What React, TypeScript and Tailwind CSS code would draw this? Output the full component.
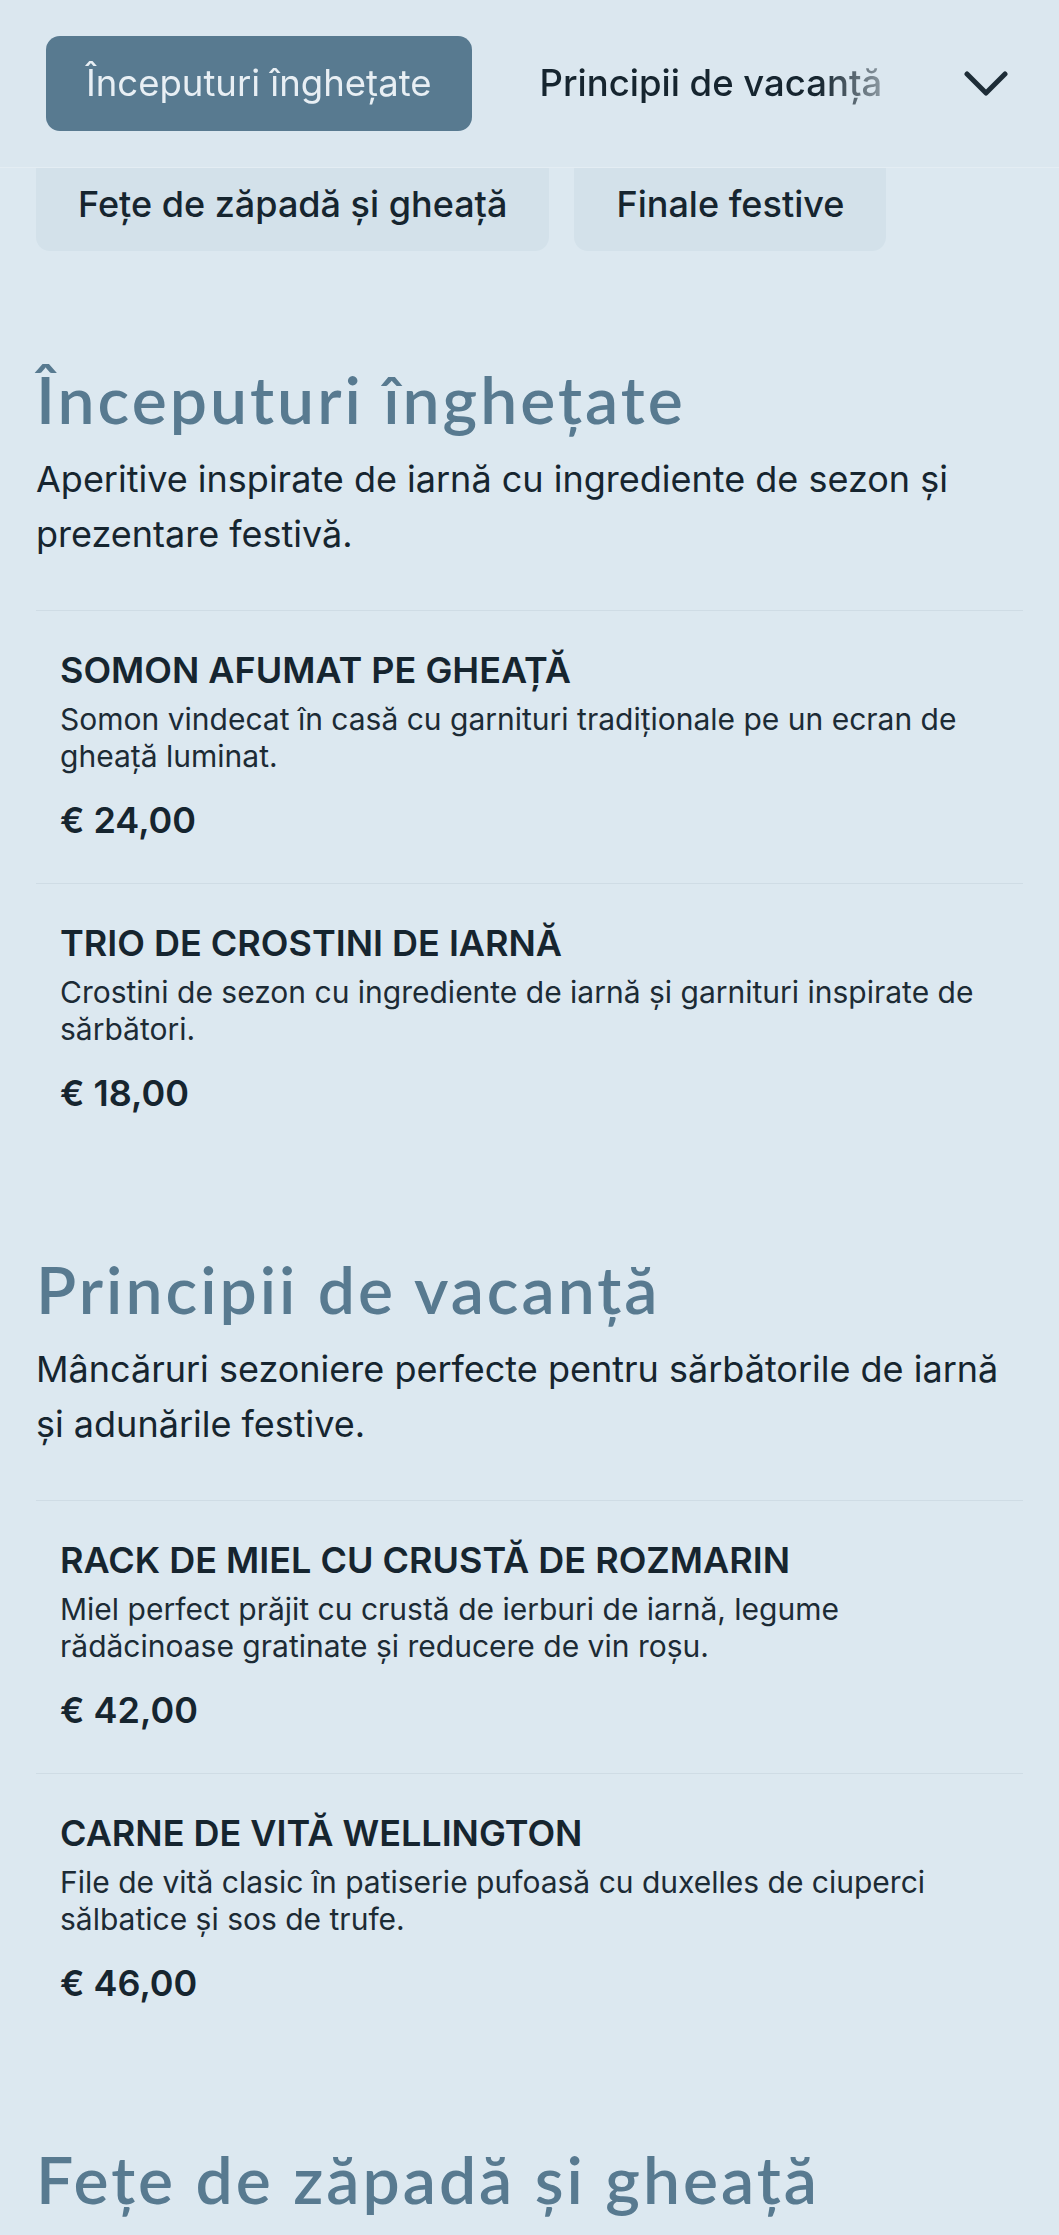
import React from 'react'

type Item = { name: string; description: string; price: string }
type Section = { id: string; title: string; description?: string; items: Item[] }

const sections: Section[] = [
  {
    id: 'inceputuri',
    title: 'Începuturi înghețate',
    description: 'Aperitive inspirate de iarnă cu ingrediente de sezon și prezentare festivă.',
    items: [
      {
        name: 'Somon afumat pe gheață',
        description: 'Somon vindecat în casă cu garnituri tradiționale pe un ecran de gheață luminat.',
        price: '€ 24,00',
      },
      {
        name: 'Trio de crostini de iarnă',
        description: 'Crostini de sezon cu ingrediente de iarnă și garnituri inspirate de sărbători.',
        price: '€ 18,00',
      },
    ],
  },
  {
    id: 'principii',
    title: 'Principii de vacanță',
    description: 'Mâncăruri sezoniere perfecte pentru sărbătorile de iarnă și adunările festive.',
    items: [
      {
        name: 'Rack de miel cu crustă de rozmarin',
        description: 'Miel perfect prăjit cu crustă de ierburi de iarnă, legume rădăcinoase gratinate și reducere de vin roșu.',
        price: '€ 42,00',
      },
      {
        name: 'Carne de vită Wellington',
        description: 'File de vită clasic în patiserie pufoasă cu duxelles de ciuperci sălbatice și sos de trufe.',
        price: '€ 46,00',
      },
    ],
  },
  {
    id: 'fete',
    title: 'Fețe de zăpadă și gheață',
    items: [],
  },
]

const body = "font-['Inter','Noto_Sans',sans-serif]"
const display = "font-['Lato','Noto_Sans',sans-serif]"

function Chevron() {
  return (
    <svg width="44" height="26" viewBox="0 0 44 26" fill="none" aria-hidden>
      <polyline
        points="3,3 22,22 41,3"
        stroke="#1e2d37"
        strokeWidth="5"
        strokeLinecap="round"
        strokeLinejoin="round"
      />
    </svg>
  )
}

function MenuItem({ item }: { item: Item }) {
  return (
    <div className="border-t border-[#cfdce5] px-6 pt-[38px] pb-[42px]">
      <h3 className="text-[36px] leading-[42px] font-semibold uppercase text-[#16252f]">{item.name}</h3>
      <p className="mt-[10px] text-[30px] leading-[37px] text-[#1c2b35]">{item.description}</p>
      <p className="mt-[24px] text-[36px] leading-[42px] font-semibold text-[#16252f]">{item.price}</p>
    </div>
  )
}

export default function App() {
  return (
    <div className={`min-h-screen bg-[#dce8f0] ${body}`}>
      <header className="flex items-center border-b border-[#e4edf3] bg-[#dbe7ef] pl-[46px] pr-[51px] pt-[36px] pb-[36px]">
        <div className="flex min-w-0 flex-1 items-center gap-[28px] overflow-hidden [mask-image:linear-gradient(to_right,black_88%,transparent)]">
          <button className="h-[95px] shrink-0 rounded-[14px] bg-[#587a90] px-[40px] text-[36.5px] text-[#e8eff4]">
            Începuturi înghețate
          </button>
          <button className="h-[95px] shrink-0 px-[40px] text-[36.5px] font-medium text-[#16252f]">
            Principii de vacanță
          </button>
        </div>
        <div className="ml-[40px] flex shrink-0 items-center">
          <Chevron />
        </div>
      </header>

      <main className="px-[36px]">
        <div className="h-[83px] overflow-hidden">
          <div className="-mt-[12px] flex gap-[25px]">
            <div className="flex h-[95px] items-center rounded-[14px] bg-[#d3e1ea] px-[42px] text-[36px] font-medium text-[#16252f]">
              Fețe de zăpadă și gheață
            </div>
            <div className="flex h-[95px] items-center rounded-[14px] bg-[#d3e1ea] px-[42px] text-[36px] font-medium text-[#16252f]">
              Finale festive
            </div>
          </div>
        </div>

        {sections.map((section, i) => (
          <section key={section.id} className={i === 0 ? 'mt-[113px]' : 'mt-[98px]'}>
            <h2 className={`${display} text-[66px] leading-[70px] font-semibold tracking-[3px] text-[#587a90]`}>
              {section.title}
            </h2>
            {section.description && (
              <p className="mt-[18px] mb-[48px] text-[36px] leading-[55px] text-[#16252f]">{section.description}</p>
            )}
            {section.items.map((item) => (
              <MenuItem key={item.name} item={item} />
            ))}
          </section>
        ))}
      </main>
    </div>
  )
}
